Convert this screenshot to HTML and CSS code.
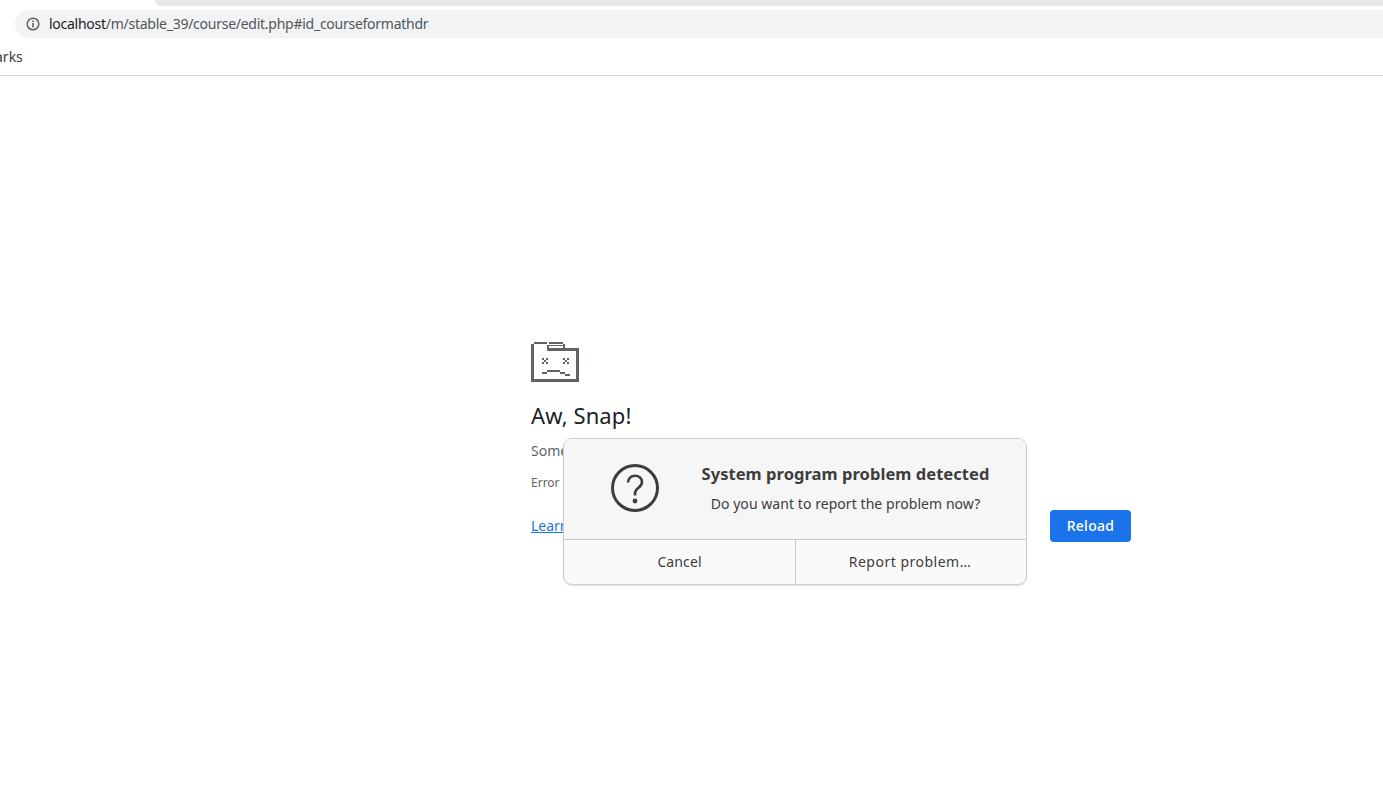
FILE: index.html
```html
<!DOCTYPE html>
<html lang="en">
<head>
<meta charset="utf-8">
<title>Aw, Snap!</title>
<link rel="stylesheet" href="styles.css">
</head>
<body>
<header class="chrome">
  <div class="tabstrip"></div>
  <div class="omnibox">
    <svg class="info" viewBox="0 0 14 14" width="14" height="14"><circle cx="7" cy="7" r="5.800" fill="none" stroke="#5f6368" stroke-width="1.500"/><rect x="6.200" y="6" width="1.600" height="4.400" fill="#5f6368"/><rect x="6.200" y="3.500" width="1.600" height="1.600" fill="#5f6368"/></svg>
    <span class="url"><span class="host">localhost</span>/m/stable_39/course/edit.php#id_courseformathdr</span>
  </div>
  <div class="bookmarks"><span class="bm-label">arks</span></div>
</header>
<main class="page">
  <div class="error">
    <svg class="sad" viewBox="0 0 48 40" width="48" height="40" shape-rendering="crispEdges">
      <path fill="#5f6368" d="M3 0h13v2H3zM18 0h14v2H18zM16 3h2v3h-2zM18 3h14v1H18zM32 2h2v4h-2zM16 6h32v3H16zM0 2h3v38H0zM45 9h3v31h-3zM3 37h42v3H3z"/>
      <path fill="#5f6368" d="M11 16h1.500v1.500H11zM15 16h1.500v1.500H15zM13 18h1.500v1.500H13zM11 20h1.500v1.500H11zM15 20h1.500v1.500H15zM32 16h1.500v1.500H32zM36 16h1.500v1.500H36zM34 18h1.500v1.500H34zM32 20h1.500v1.500H32zM36 20h1.500v1.500H36z"/>
      <path fill="#5f6368" d="M11 30h5v1.500h-5zM16 28h13v1.500H16zM29 30h5v1.500h-5zM34 32h5v1.500h-5z"/>
    </svg>
    <h1 class="title">Aw, Snap!</h1>
    <p class="msg">Something went wrong while displaying this webpage.</p>
    <p class="code">Error code: 5</p>
    <div class="actions">
      <a class="learn" href="#">Learn more</a>
      <button class="reload">Reload</button>
    </div>
  </div>
</main>
<div class="dialog">
  <div class="dialog-body">
    <svg class="q" viewBox="0 0 48 48" width="48" height="48">
      <circle cx="24" cy="24" r="22.500" fill="none" stroke="#3d3d3d" stroke-width="3"/>
      <path d="M17 18.500c0-4 3-6.800 7-6.800s7 2.700 7 6.300c0 3-1.800 4.500-3.800 6-2 1.500-3.200 2.800-3.200 5.500v2" fill="none" stroke="#3d3d3d" stroke-width="2.600"/>
      <circle cx="24" cy="37" r="2.400" fill="#3d3d3d"/>
    </svg>
    <div class="dialog-text">
      <div class="dialog-title">System program problem detected</div>
      <div class="dialog-sub">Do you want to report the problem now?</div>
    </div>
  </div>
  <div class="dialog-buttons">
    <div class="dbtn">Cancel</div>
    <div class="dbtn dbtn-right">Report problem…</div>
  </div>
</div>
</body>
</html>
```
FILE: styles.css
```css
* { box-sizing: border-box; }
html, body { margin: 0; height: 100%; overflow: hidden; background: #fff; }
body { font-family: "Noto Sans", "Open Sans", sans-serif; }

.chrome { height: 76px; border-bottom: 1px solid #dadada; }
.tabstrip { height: 6px; margin-left: 155px; background: #e4e7ea; border-bottom-left-radius: 8px; }
.omnibox {
  height: 28px; margin: 4px 0 0 15px; background: #f1f3f4;
  border-radius: 14px 0 0 14px; display: flex; align-items: center; padding-left: 11px;
}
.info { flex: none; }
.url { margin: -2px 0 0 9px; font-size: 14px; color: #51565a; letter-spacing: -0.26px; white-space: nowrap; }
.host { color: #202124; }
.bookmarks { height: 37px; display: flex; align-items: center; overflow: hidden; }
.bm-label { font-size: 14px; color: #3c3c3c; margin-left: -5px; }

.page { padding: 266px 0 0 531px; }
.error { width: 600px; }
.sad { display: block; }
.title { margin: 18px 0 0; font-size: 22px; line-height: 30px; font-weight: 400; color: #202124; letter-spacing: 0.1px; }
.msg { margin: 11px 0 0; font-size: 14px; line-height: 20px; color: #5f6368; }
.code { margin: 13px 0 0; font-size: 12px; line-height: 18px; color: #5f6368; }
.actions { margin-top: 18px; display: flex; align-items: center; justify-content: space-between; }
.learn { font-size: 14px; color: #1a73e8; text-decoration: underline; margin-top: -2px; }
.reload {
  width: 81px; height: 32px; border: 0; border-radius: 4px; background: #1a73e8;
  color: #fff; font: 500 14px "Noto Sans", sans-serif; letter-spacing: 0.3px; padding: 0 0 2px;
}

.dialog {
  position: absolute; left: 563px; top: 438px; width: 464px; height: 147px;
  background: #fafafa; border: 1px solid #cdcdcd; border-radius: 9px;
  box-shadow: 0 1px 2px rgba(0,0,0,.12); overflow: hidden; display: flex; flex-direction: column;
  color: #3d3d3d;
}
.dialog-body {
  height: 101px; background: #f6f6f6; border-bottom: 1px solid #c8c8c8;
  display: flex; align-items: center; padding-left: 47px;
}
.q { flex: none; margin-top: -3px; }
.dialog-text { width: 333px; margin-left: 20px; text-align: center; margin-top: -2px; }
.dialog-title { font-size: 16.500px; font-weight: 700; line-height: 22px; letter-spacing: 0.05px; }
.dialog-sub { font-size: 14px; line-height: 20px; margin-top: 9px; letter-spacing: 0.06px; }
.dialog-buttons { flex: 1; display: flex; font-size: 14px; }
.dbtn { width: 231px; display: flex; align-items: center; justify-content: center; letter-spacing: 0.1px; padding-bottom: 2px; }
.dbtn-right { flex: 1; border-left: 1px solid #c8c8c8; letter-spacing: 0.5px; padding-right: 2px; }
```
